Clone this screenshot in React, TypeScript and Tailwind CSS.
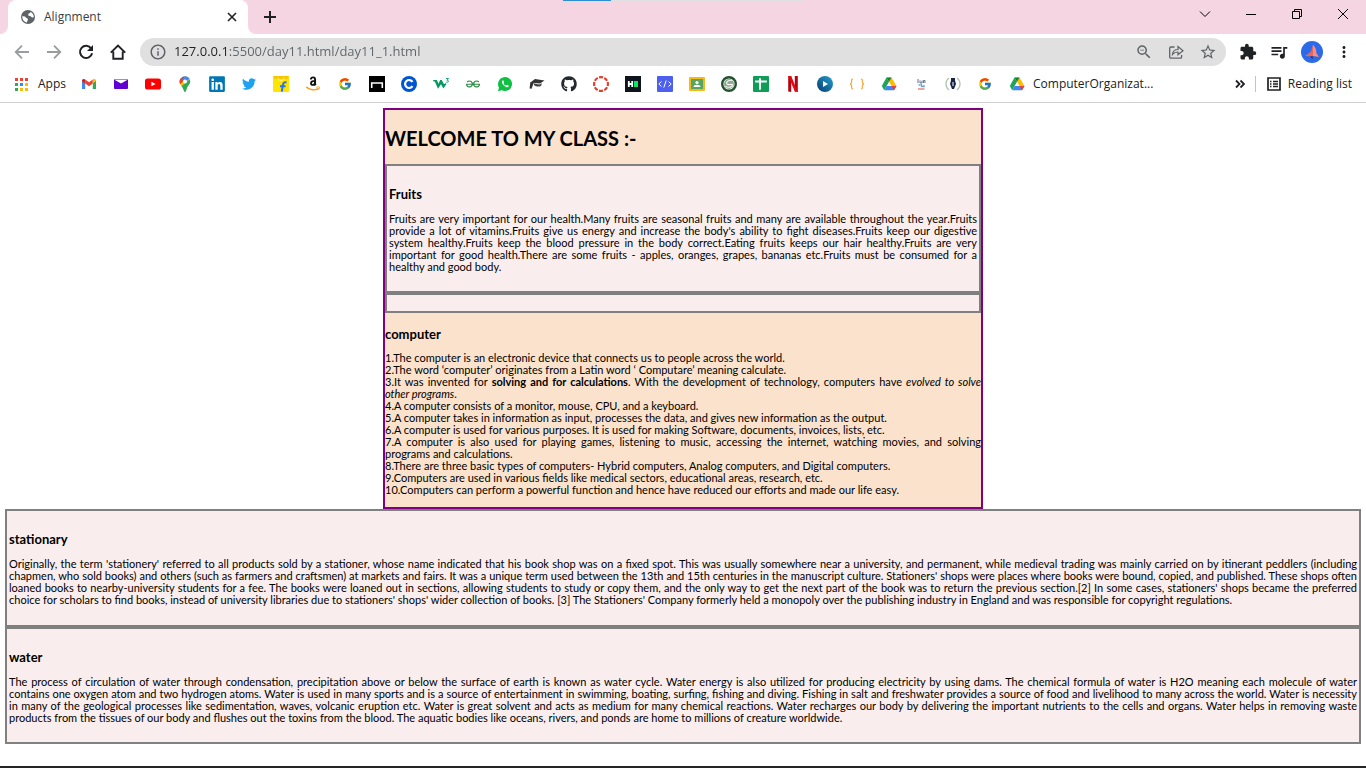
import type { ReactNode } from "react";
import { FaGithub, FaLinkedin, FaTwitter } from "react-icons/fa";
import { FcGoogle } from "react-icons/fc";
import { SiGeeksforgeeks } from "react-icons/si";
import { MdExtension, MdMoreVert, MdQueueMusic, MdZoomOut, MdStarBorder, MdInfoOutline } from "react-icons/md";

function Svg({ children, box = 16, size = "size-4" }: { children: ReactNode; box?: number; size?: string }) {
  return (
    <svg viewBox={`0 0 ${box} ${box}`} className={size} fill="none" aria-hidden="true">
      {children}
    </svg>
  );
}

const drive = (
  <Svg>
    <path d="M5.5 1.5h5l5 8.5h-5z" fill="#fbbc04" />
    <path d="M5.5 1.5 8 5.8 3.2 14.3.8 10z" fill="#1ea45c" />
    <path d="M5.5 1.5h5L8 5.8z" fill="#188038" />
    <path d="M5.6 10h9.9L13 14.3H3.2z" fill="#4285f4" />
    <path d="M10.6 10h4.9L13 14.3z" fill="#ea4335" />
  </Svg>
);

const bookmarks: { name: string; icon: ReactNode }[] = [
  {
    name: "Gmail",
    icon: (
      <Svg>
        <path d="M1 4.6v8.3h3.2V7z" fill="#4285f4" />
        <path d="M15 4.6v8.3h-3.2V7z" fill="#34a853" />
        <path d="M4.2 3.4 8 6.3l3.8-2.9v4L8 10.3 4.2 7.4z" fill="#ea4335" />
        <path d="M1 4.6C1 2.9 3 2.4 4.2 3.4v4L1 5z" fill="#c5221f" />
        <path d="M15 4.6c0-1.7-2-2.2-3.2-1.2v4L15 5z" fill="#fbbc04" />
      </Svg>
    ),
  },
  {
    name: "Yahoo Mail",
    icon: (
      <Svg>
        <rect x="1" y="3" width="14" height="10" rx="1" fill="#6001d2" />
        <path d="M1 3.6h14L8 7.6z" fill="#fff" />
      </Svg>
    ),
  },
  {
    name: "YouTube",
    icon: (
      <Svg>
        <rect y="2.5" width="16" height="11" rx="2.6" fill="#f00" />
        <path d="m6.4 5.7 4.2 2.3-4.2 2.3z" fill="#fff" />
      </Svg>
    ),
  },
  {
    name: "Maps",
    icon: (
      <Svg>
        <path d="M8 .2a5.4 5.4 0 0 0-4.2 2L8 6z" fill="#1a73e8" />
        <path d="M3.8 2.2A5.3 5.3 0 0 0 3.2 8L8 3.4z" fill="#ea4335" />
        <path d="M8 .2c2 0 4 1.2 4.7 3L6 9.5l-1.5.8A11 11 0 0 1 3.2 8z" fill="#fbbc04" />
        <path d="M3.8 2.2A5.3 5.3 0 0 0 3.2 8L8 3.4z" fill="#ea4335" />
        <path d="M8 .2c1.9 0 3.5.9 4.5 2.4L8.8 6 6.2 3.4z" fill="#4285f4" />
        <path d="M12.7 3.2c1.3 3-.2 5-1.8 7-1.3 1.700-1.500 5.800-2.900 5.800S6.800 13 4.500 10.300z" fill="#34a853" />
        <circle cx="8" cy="5.400" r="2" fill="#fff" />
      </Svg>
    ),
  },
  {
    name: "LinkedIn",
    icon: <FaLinkedin className="size-[18px] -m-px text-[#0077b5]" />,
  },
  { name: "Twitter", icon: <FaTwitter className="size-3.5 m-px text-[#1da1f2]" /> },
  {
    name: "Flipkart",
    icon: (
      <Svg>
        <rect width="16" height="16" rx="1" fill="#ffe500" />
        <path d="M0 0h16l-2 3H2z" fill="#f7c500" />
        <path d="M5 1.500c0 2 1.200 3 3 3s3-1 3-3" stroke="#fff3a0" />
        <path d="M13.500 6.500c-2.500-.7-3.300.6-3.600 2.500L8.800 15.500M7 10.300h5.500" stroke="#2874f0" strokeWidth="2" />
      </Svg>
    ),
  },
  {
    name: "Amazon",
    icon: (
      <Svg>
        <path d="M5.800 3.500C6 1.900 7 1.400 8.100 1.400c1.300 0 2 .7 2 2v4c0 .8.300 1.300.700 1.700M10 4.900c-2 0-4 .2-4 2.300 0 2.300 3.300 2.300 4-.2" stroke="#111" strokeWidth="1.900" />
        <path d="M1.200 11.200c4 3 9 3.200 12.200 1.100" stroke="#f90" strokeWidth="1.500" />
        <path d="M11.500 11.200c1.700-.5 3-.3 3 .2s-.3 1.700-1 2.500" stroke="#f90" />
      </Svg>
    ),
  },
  { name: "Google", icon: <FcGoogle className="size-3.5 m-px" /> },
  {
    name: "Bench",
    icon: (
      <Svg>
        <path fill="#000" d="M0 0h16v16H0z" />
        <path d="M2.700 12V7h10.600v5" stroke="#fff" strokeWidth="1.600" />
      </Svg>
    ),
  },
  {
    name: "Coursera",
    icon: (
      <Svg>
        <circle cx="8" cy="8" r="8" fill="#0056d2" />
        <path d="M11.500 5.900A4 4 0 1 0 11.500 10.100" stroke="#fff" strokeWidth="2.200" />
      </Svg>
    ),
  },
  {
    name: "W3Schools",
    icon: (
      <Svg>
        <path d="M0 4h3.800l1.700 3.800L7.200 4h1.600l2.200 4.200L12.600 7l.7 1.200-2.900 4.300-2.400-4.300-3 4.600L1.800 5.600H.6z" fill="#059862" />
        <path d="M13 2.500h2.500L14 4.300c2.500 0 1.800 2.700-.9 1.700" stroke="#059862" strokeWidth=".9" />
      </Svg>
    ),
  },
  { name: "GeeksforGeeks", icon: <SiGeeksforgeeks className="size-3.5 m-px text-[#2f8d46]" /> },
  {
    name: "WhatsApp",
    icon: (
      <Svg>
        <path d="M1 15.200 2 11.600A7 7 0 1 1 4.700 14.200z" fill="#0fc143" />
        <path d="M5.700 4.300c-1.600 1-.8 3.200 1.200 5.200s4.300 2.500 4.800.800c.2-.700-.2-.900-1.500-1.500-.600-.200-.700.900-1.300.800-.7-.2-2.300-1.600-2.300-2.200 0-.4.700-.7.500-1.200-.500-1.500-.800-2-1.400-1.900z" fill="#fff" />
      </Svg>
    ),
  },
  {
    name: "Courses",
    icon: (
      <Svg>
        <path d="M1.300 6.500 6 3l9.500 1.500L11 7.500z" fill="#333" />
        <path d="m4.500 7.200 5.800 1.300 2.500-1.300-.6 2.500c-2 1.500-5.500.8-7-.5z" fill="#444" />
        <path d="M1.300 6.200 5 5.800 2.600 12.800.6 12.500z" fill="#333" />
      </Svg>
    ),
  },
  { name: "GitHub", icon: <FaGithub className="size-4 text-[#24292f]" /> },
  {
    name: "Canvas",
    icon: (
      <Svg>
        <circle cx="8" cy="8" r="6.900" stroke="#e13f2b" strokeWidth="2.200" pathLength="80" strokeDasharray="7.500 2.500" strokeDashoffset="3.700" />
      </Svg>
    ),
  },
  {
    name: "HackerRank",
    icon: (
      <Svg>
        <path fill="#0e141e" d="M0 0h16v16H0z" />
        <path d="M3.800 5v6M7.200 5v6M3.800 8h3.400" stroke="#fff" strokeWidth="1.800" />
        <path d="M9 5h4v6H9z" fill="#00ea64" />
      </Svg>
    ),
  },
  {
    name: "Code editor",
    icon: (
      <Svg>
        <rect width="16" height="16" rx="1" fill="#4c5fef" />
        <path d="M4.500 5.500 1.800 8l2.700 2.500M11.500 5.500 14.200 8l-2.700 2.500M9.200 4.500l-2.400 7" stroke="#fff" />
      </Svg>
    ),
  },
  {
    name: "Classroom",
    icon: (
      <Svg>
        <rect y="1" width="16" height="14" rx="1" fill="#f5ba14" />
        <path d="M2 3h12v10H2z" fill="#57a463" />
        <circle cx="8" cy="6.500" r="1.600" fill="#fff" />
        <path d="M4.500 11c0-3 7-3 7 0z" fill="#fff" />
      </Svg>
    ),
  },
  {
    name: "College",
    icon: (
      <Svg>
        <circle cx="8" cy="8" r="6.800" stroke="#24512f" strokeWidth="2.400" />
        <circle cx="8" cy="8" r="5" fill="#8fa891" />
        <path d="M11.500 4.500C8 3.500 4.500 6 6 8s5-1 5.500 1-4 3-7 1.500" stroke="#f4f7f3" strokeWidth="1.200" />
      </Svg>
    ),
  },
  {
    name: "Sheets",
    icon: (
      <Svg>
        <rect width="16" height="16" rx="1" fill="#0f9d58" />
        <path d="M2.200 5.500h11.600M7 2.200v11.600" stroke="#fff" strokeWidth="1.900" />
      </Svg>
    ),
  },
  {
    name: "Netflix",
    icon: (
      <Svg>
        <path d="M3.200 0h3v16l-3-.4zM9.800 0h3v16l-3-.4z" fill="#b1060f" />
        <path d="M3.200 0h3l6.600 16-3-.4z" fill="#e50914" />
      </Svg>
    ),
  },
  {
    name: "Player",
    icon: (
      <Svg>
        <defs>
          <linearGradient id="player" x1="1" y1="0" x2="0" y2="1">
            <stop stopColor="#24a2d0" />
            <stop offset="1" stopColor="#063b70" />
          </linearGradient>
        </defs>
        <circle cx="8" cy="8" r="8" fill="url(#player)" />
        <path d="m6 5 5 3-5 3z" fill="#fff" />
      </Svg>
    ),
  },
  {
    name: "Braces",
    icon: (
      <Svg>
        <path d="M4 3.200c-2 0-1.200 2-1.500 3.500C2.300 7.600 1.800 8 1 8c.8 0 1.300.4 1.500 1.300.3 1.500-.5 3.500 1.500 3.500M12 3.200c2 0 1.200 2 1.500 3.500.2.900.700 1.300 1.500 1.300-.8 0-1.300.4-1.500 1.300-.3 1.500.5 3.500-1.500 3.500" stroke="#f6ac45" strokeWidth="1.300" />
      </Svg>
    ),
  },
  { name: "Drive", icon: drive },
  {
    name: "Live jobs",
    icon: (
      <Svg>
        <path d="M5 3v4M7 4.500V7h2V4.500M10.500 7V4.500H12V7" stroke="#62728f" />
        <path d="M5.500 9h2M8.500 8v2.500H11V9" stroke="#67a9dd" strokeWidth="1.400" />
        <path d="M5 13h6.500" stroke="#f1a5a0" strokeWidth="2" />
      </Svg>
    ),
  },
  {
    name: "Writer",
    icon: (
      <Svg>
        <path d="M4 2C-.2 5 .2 11 4 14M12 2c4.200 3 3.800 9 0 12" stroke="#b5c5b5" strokeWidth="1.300" />
        <path d="M6 2h4v2.500L11 8l-2 5H7L5 8l1-3.500z" fill="#172447" />
        <path d="M8 6v4" stroke="#fff" />
      </Svg>
    ),
  },
  { name: "Google", icon: <FcGoogle className="size-3.5 m-px" /> },
];

const appDots = ["#ea4335", "#ea4335", "#ea4335", "#34a853", "#4285f4", "#fbbc04", "#34a853", "#fbbc04", "#fbbc04"];

function TitleBar() {
  return (
    <header className="relative flex h-[34px] items-end bg-[#f6d5e3]">
      <div className="absolute left-[563px] top-0 h-px w-[241px] bg-[#e0e0e0]">
        <div className="h-px w-12 bg-[#2b8fd6]" />
      </div>
      <div className="size-2 bg-white"><div className="size-2 rounded-br-lg bg-[#f6d5e3]" /></div>
      <div className="flex h-full w-60 items-center rounded-t-lg bg-white pl-3 pr-2.5">
        <Svg>
          <circle cx="8" cy="8" r="7" fill="#5f6368" />
          <path d="M2.300 7.300c1.700-.2 3 .3 3.600 1.300.5.900 2 .7 2 1.900 0 1-.9 1.200-.9 3C4.300 13.200 2 10.500 2.300 7.300z" fill="#fff" />
          <path d="M10.500 3c-.2 1.300-1.800 1-2.200 2.200-.3 1 .2 1.600 1.500 1.700 1.500.1 1.300 1.600 2.700 1.600.6 0 .9-.3 1.300-.6C13.700 5.700 12.500 3.900 10.500 3z" fill="#fff" />
        </Svg>
        <span className="ml-2 flex-1 text-xs text-[#3c4043]">Alignment</span>
        <button aria-label="Close tab" className="text-[#202124]">
          <Svg box={12} size="size-3"><path d="m2 2 8 8m0-8-8 8" stroke="currentColor" strokeWidth="1.600" /></Svg>
        </button>
      </div>
      <div className="size-2 bg-white"><div className="size-2 rounded-bl-lg bg-[#f6d5e3]" /></div>
      <button aria-label="New tab" className="ml-2 flex h-full items-center text-[#202124]">
        <Svg box={12} size="size-3"><path d="M6 0v12M0 6h12" stroke="currentColor" strokeWidth="2" /></Svg>
      </button>
      <div className="ml-auto flex h-7 items-center gap-[34px] self-start pr-[17px] text-black">
        <button aria-label="Search tabs"><Svg box={12} size="size-3"><path d="m1 3.500 5 5 5-5" stroke="currentColor" /></Svg></button>
        <button aria-label="Minimize"><Svg box={12} size="size-3"><path d="M1 6.500h10" stroke="currentColor" /></Svg></button>
        <button aria-label="Restore"><Svg box={12} size="size-3"><path d="M1.500 3.500h7v7h-7zM3.500 3.500v-2h7v7h-2" stroke="currentColor" /></Svg></button>
        <button aria-label="Close window"><Svg box={12} size="size-3"><path d="m1 1 10 10M11 1 1 11" stroke="currentColor" /></Svg></button>
      </div>
    </header>
  );
}

function Toolbar() {
  return (
    <div className="flex items-center pl-3.5 pr-[13px] pt-1">
      <nav className="flex gap-4" aria-label="Navigation">
        <button aria-label="Back" className="text-[#9a9c9e]"><Svg><path d="M15 8H2m6-6.300L1.700 8 8 14.300" stroke="currentColor" strokeWidth="1.800" /></Svg></button>
        <button aria-label="Forward" className="text-[#9a9c9e]"><Svg><path d="M1 8h13M8 1.700 14.300 8 8 14.300" stroke="currentColor" strokeWidth="1.800" /></Svg></button>
        <button aria-label="Reload" className="text-[#202124]">
          <Svg>
            <path d="M13.200 4.500A6.100 6.100 0 1 0 14.100 9.200" stroke="currentColor" strokeWidth="2" />
            <path d="M15 1v6H9z" fill="currentColor" />
          </Svg>
        </button>
        <button aria-label="Home" className="text-[#202124]"><Svg><path d="M.8 8.700 8 1.500l7.200 7.200M3.300 7.500v7.300h9.400V7.500" stroke="currentColor" strokeWidth="1.900" /></Svg></button>
      </nav>
      <div className="ml-3.5 flex h-7 flex-1 items-center rounded-full bg-[#e0e0e0] px-[9px] text-[#5f6368]">
        <MdInfoOutline className="size-[18px]" />
        <input
          aria-label="Address"
          defaultValue="127.0.0.1:5500/day11.html/day11_1.html"
          className="ml-[7px] min-w-0 flex-1 bg-[linear-gradient(90deg,#202124_54px,#5f6368_54px)] bg-clip-text text-[13px] text-transparent outline-none"
        />
        <div className="flex gap-3.5">
          <button aria-label="Zoom"><MdZoomOut className="size-[18px]" /></button>
          <button aria-label="Share">
            <Svg box={18} size="size-[18px]">
              <path d="M7.500 4H4c-.8 0-1.300.5-1.300 1.200v8.800c0 .7.500 1.200 1.200 1.200h9.500c.7 0 1.200-.5 1.200-1.200V12" stroke="currentColor" strokeWidth="1.300" />
              <path d="M5.500 11.500c.3-3.300 2.200-5 5.500-5V3.500l5 4.200-5 4V9c-2.500 0-4 .5-5.500 2.500z" stroke="currentColor" strokeWidth="1.200" />
            </Svg>
          </button>
          <button aria-label="Bookmark this page"><MdStarBorder className="size-[18px]" /></button>
        </div>
      </div>
      <div className="ml-[13px] flex items-center gap-3 text-[#202124]">
        <button aria-label="Extensions"><MdExtension className="size-[18px]" /></button>
        <button aria-label="Media"><MdQueueMusic className="size-5" /></button>
        <button aria-label="Profile">
          <Svg box={22} size="size-[22px]">
            <circle cx="11" cy="11" r="11" fill="#2b6bea" />
            <path d="M12 3.500 10 10.500l-6 4.500 8 .5z" fill="#e8665f" />
            <path d="M12 3.500c2.500 3 3.500 5.500 3.300 8.500L18 16l-6-1z" fill="#ff8d7d" />
            <path d="m9 15.200 2.500 3.300.5-3.300z" fill="#203d82" />
          </Svg>
        </button>
        <button aria-label="Menu"><MdMoreVert className="size-[18px]" /></button>
      </div>
    </div>
  );
}

function BookmarkBar() {
  return (
    <div className="flex h-[37px] items-center border-b border-[#cfcfcf] pl-[15px] pr-3.5 text-xs text-[#202124]">
      <button className="flex items-center gap-2.5">
        <Svg box={13} size="size-[13px]">
          {appDots.map((color, i) => (
            <rect key={i} x={(i % 3) * 5} y={Math.floor(i / 3) * 5} width="3" height="3" fill={color} />
          ))}
        </Svg>
        Apps
      </button>
      <nav className="ml-[15px] flex min-w-0 items-center gap-4" aria-label="Bookmarks">
        {bookmarks.map((item, i) => (
          <a key={i} href="#" aria-label={item.name} className="block shrink-0">{item.icon}</a>
        ))}
        <a href="#" className="flex items-center gap-2 whitespace-nowrap">{drive}ComputerOrganizat...</a>
      </nav>
      <button aria-label="More bookmarks" className="ml-auto">
        <Svg box={10} size="size-2.5"><path d="m1 1.500 3.500 3.500L1 8.500m4.500-7L9 5 5.500 8.500" stroke="currentColor" strokeWidth="1.800" /></Svg>
      </button>
      <button className="ml-2.5 flex items-center gap-1.5 whitespace-nowrap border-l border-[#c4c4c4] pl-2.5">
        <Svg>
          <path d="M2 2h12v12H2z" stroke="currentColor" strokeWidth="1.700" />
          <path d="M4 5.500h1.500M4 8h1.500M4 10.500h1.500M7 5.500h5M7 8h5M7 10.500h5" stroke="currentColor" strokeWidth="1.300" />
        </Svg>
        Reading list
      </button>
    </div>
  );
}

function Box({ title, children, className = "" }: { title: string; children: ReactNode; className?: string }) {
  return (
    <section className={`border-2 border-[#808080] bg-[#f9eeed] px-0.5 pt-[21px] ${className}`}>
      <h2 className="text-[13px] leading-[14px] font-bold">{title}</h2>
      <p className="mt-3 text-justify">{children}</p>
    </section>
  );
}

export default function App() {
  return (
    <div className="flex min-h-screen flex-col bg-white font-['Open_Sans','Noto_Sans',sans-serif]">
      <TitleBar />
      <Toolbar />
      <BookmarkBar />
      <main className="flex-1 p-[5px] font-['Lato','Noto_Sans',sans-serif] text-[11px] leading-3 text-black">
        <article className="mx-auto max-w-[600px] border-2 border-[#800080] bg-[#fae2cd]">
          <h1 className="mt-[15px] mb-[13px] text-xl leading-[26px] font-bold">WELCOME TO MY CLASS :-</h1>
          <Box title="Fruits" className="pb-[18px]">
            Fruits are very important for our health.Many fruits are seasonal fruits and many are available throughout the year.Fruits
            provide a lot of vitamins.Fruits give us energy and increase the body's ability to fight diseases.Fruits keep our digestive
            system healthy.Fruits keep the blood pressure in the body correct.Eating fruits keeps our hair healthy.Fruits are very
            important for good health.There are some fruits - apples, oranges, grapes, bananas etc.Fruits must be consumed for a
            healthy and good body.
          </Box>
          <div className="h-5 border-2 border-[#808080] bg-[#f9eeed]" />
          <h2 className="mt-3.5 text-[13px] leading-[14px] font-bold">computer</h2>
          <p className="my-[11px] text-justify">
            1.The computer is an electronic device that connects us to people across the world.<br />
            2.The word ‘computer’ originates from a Latin word ‘ Computare’ meaning calculate.<br />
            3.It was invented for <b>solving and for calculations</b>. With the development of technology, computers have <i>evolved to solve other programs</i>.<br />
            4.A computer consists of a monitor, mouse, CPU, and a keyboard.<br />
            5.A computer takes in information as input, processes the data, and gives new information as the output.<br />
            6.A computer is used for various purposes. It is used for making Software, documents, invoices, lists, etc.<br />
            7.A computer is also used for playing games, listening to music, accessing the internet, watching movies, and solving programs and calculations.<br />
            8.There are three basic types of computers- Hybrid computers, Analog computers, and Digital computers.<br />
            9.Computers are used in various fields like medical sectors, educational areas, research, etc.<br />
            10.Computers can perform a powerful function and hence have reduced our efforts and made our life easy.
          </p>
        </article>
        <Box title="stationary" className="pb-[19px]">
          Originally, the term 'stationery' referred to all products sold by a stationer, whose name indicated that his book shop was on a fixed spot. This was usually somewhere near a university, and permanent, while medieval trading was mainly carried on by itinerant peddlers (including
          chapmen, who sold books) and others (such as farmers and craftsmen) at markets and fairs. It was a unique term used between the 13th and 15th centuries in the manuscript culture. Stationers' shops were places where books were bound, copied, and published. These shops often
          loaned books to nearby-university students for a fee. The books were loaned out in sections, allowing students to study or copy them, and the only way to get the next part of the book was to return the previous section.[2] In some cases, stationers' shops became the preferred
          choice for scholars to find books, instead of university libraries due to stationers' shops' wider collection of books. [3] The Stationers' Company formerly held a monopoly over the publishing industry in England and was responsible for copyright regulations.
        </Box>
        <Box title="water" className="pb-[18px]">
          The process of circulation of water through condensation, precipitation above or below the surface of earth is known as water cycle. Water energy is also utilized for producing electricity by using dams. The chemical formula of water is H2O meaning each molecule of water
          contains one oxygen atom and two hydrogen atoms. Water is used in many sports and is a source of entertainment in swimming, boating, surfing, fishing and diving. Fishing in salt and freshwater provides a source of food and livelihood to many across the world. Water is necessity
          in many of the geological processes like sedimentation, waves, volcanic eruption etc. Water is great solvent and acts as medium for many chemical reactions. Water recharges our body by delivering the important nutrients to the cells and organs. Water helps in removing waste
          products from the tissues of our body and flushes out the toxins from the blood. The aquatic bodies like oceans, rivers, and ponds are home to millions of creature worldwide.
        </Box>
      </main>
      <footer className="h-0.5 bg-[#252525]" />
    </div>
  );
}
